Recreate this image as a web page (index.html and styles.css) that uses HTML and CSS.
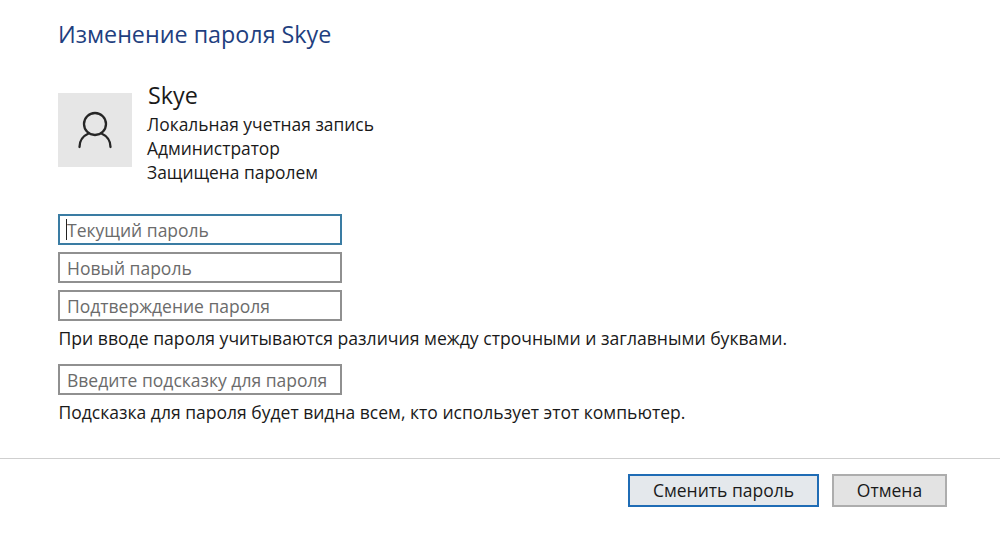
FILE: index.html
```html
<!DOCTYPE html>
<html lang="ru">
<head>
<meta charset="utf-8">
<title>Изменение пароля Skye</title>
<link rel="stylesheet" href="styles.css">
</head>
<body>
<main class="content">
  <h1 class="title">Изменение пароля Skye</h1>
  <section class="account">
    <div class="avatar">
      <svg class="avatar-icon" width="34" height="40" viewBox="0 0 34 40" fill="none" stroke="#262626" stroke-width="2.3" stroke-linecap="round">
        <circle cx="17" cy="14" r="11"/>
        <path d="M1.500 37C1.500 30.500 5 26 10.500 23.500M32.500 37C32.500 30.500 29 26 23.500 23.500"/>
      </svg>
    </div>
    <div class="account-info">
      <div class="account-name">Skye</div>
      <div class="account-line account-line-first">Локальная учетная запись</div>
      <div class="account-line">Администратор</div>
      <div class="account-line">Защищена паролем</div>
    </div>
  </section>
  <form class="form">
    <div class="field field-focus"><span class="caret"></span><span class="placeholder">Текущий пароль</span></div>
    <div class="field"><span class="placeholder">Новый пароль</span></div>
    <div class="field"><span class="placeholder">Подтверждение пароля</span></div>
    <p class="note">При вводе пароля учитываются различия между строчными и заглавными буквами.</p>
    <div class="field field-hint"><span class="placeholder">Введите подсказку для пароля</span></div>
    <p class="note note-last">Подсказка для пароля будет видна всем, кто использует этот компьютер.</p>
  </form>
</main>
<footer class="footer">
  <button class="btn btn-primary" type="button">Сменить пароль</button>
  <button class="btn" type="button">Отмена</button>
</footer>
</body>
</html>
```
FILE: styles.css
```css
* { box-sizing: border-box; }
html, body { margin: 0; height: 536px; overflow: hidden; background: #fff; }
body { font-family: "Open Sans", "Noto Sans", sans-serif; color: #1a1a1a; }
.content { padding: 19px 0 0 58px; height: 458px; }
.title { margin: 0; font-size: 23.300px; line-height: 30px; font-weight: 400; color: #1f3f7f; }
.account { display: flex; gap: 15px; margin-top: 32px; }
.avatar { width: 74px; height: 74px; margin-top: 12px; background: #e6e6e6; display: flex; align-items: center; justify-content: center; flex: none; }
.account-info { display: flex; flex-direction: column; }
.account-name { font-size: 23.300px; line-height: 28px; margin-left: 1px; }
.account-line { font-size: 17.400px; line-height: 24px; }
.account-line-first { margin-top: 3px; }
.form { margin-top: 30px; }
.field { position: relative; display: flex; align-items: center; width: 284px; height: 31px; margin-bottom: 7px; padding-left: 7px; padding-top: 1px; border: 2px solid #909090; }
.field-focus { border-color: #3a7ca3; }
.field-hint { margin-top: 14px; margin-bottom: 0; }
.caret { position: absolute; left: 6px; top: 3px; width: 1px; height: 21px; background: #222; }
.placeholder { font-size: 17.500px; color: #6b6b6b; line-height: 22px; }
.note { margin: -2px 0 0 0.500px; font-size: 17.600px; line-height: 24px; white-space: nowrap; }
.note-last { margin-top: 5px; font-size: 17.520px; }
.footer { display: flex; justify-content: flex-end; gap: 13px; height: 78px; padding: 15px 53px 0 0; border-top: 1px solid #cfcfcf; align-items: flex-start; }
.btn { width: 115px; height: 33px; padding: 0; background: #e3e3e3; border: 2px solid #adadad; font: 17.500px/1 "Open Sans", "Noto Sans", sans-serif; color: #1a1a1a; }
.btn-primary { width: 191px; border-color: #1f6cb5; background: #e4e8ec; }
```
